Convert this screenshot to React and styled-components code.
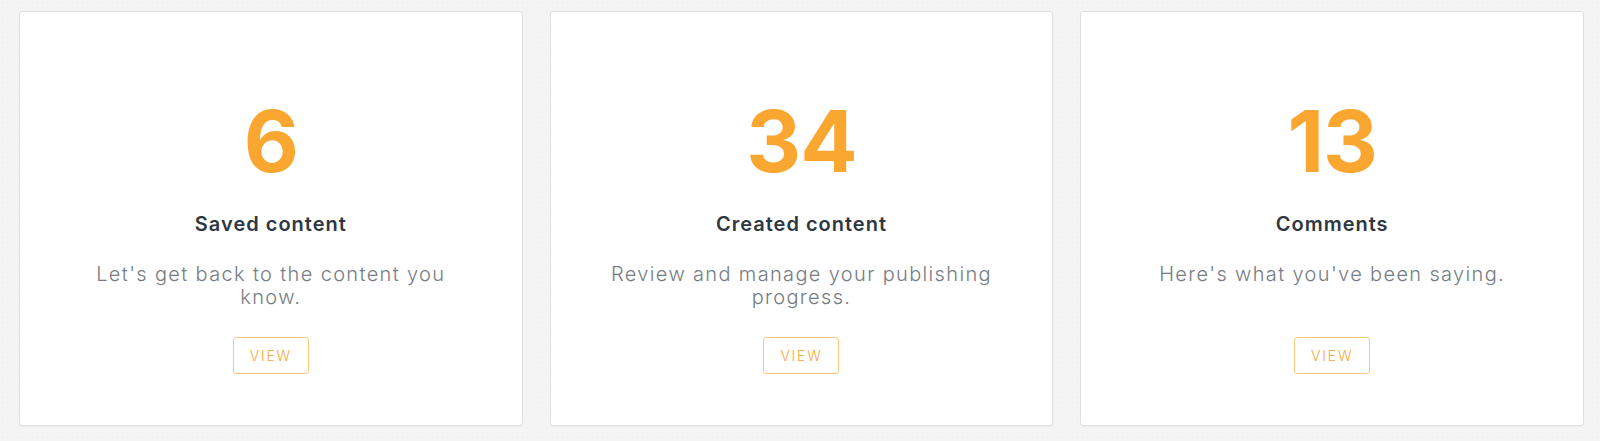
import React from "react";
import styled, { createGlobalStyle } from "styled-components";

const GlobalStyle = createGlobalStyle`
  html, body {
    margin: 0;
    padding: 0;
  }
  body {
    font-family: Inter, "Liberation Sans", sans-serif;
    background-color: #f4f4f4;
    background-image: radial-gradient(#ededed 0.7px, transparent 1px);
    background-size: 5px 5px;
  }
`;

const stats = [
  {
    count: 6,
    title: "Saved content",
    text: "Let's get back to the content you know.",
  },
  {
    count: 34,
    title: "Created content",
    text: "Review and manage your publishing progress.",
  },
  {
    count: 13,
    title: "Comments",
    text: "Here's what you've been saying.",
  },
];

function App() {
  return (
    <>
      <GlobalStyle />
      <Grid>
        {stats.map((s) => (
          <Card key={s.title}>
            <Count>{s.count}</Count>
            <Title>{s.title}</Title>
            <Text>{s.text}</Text>
            <ViewBtn>View</ViewBtn>
          </Card>
        ))}
      </Grid>
    </>
  );
}

const Grid = styled.div`
  display: grid;
  grid-template-columns: repeat(3, 1fr);
  gap: 27px;
  padding: 11px 16px 15px 19px;
`;

const Card = styled.div`
  display: flex;
  flex-direction: column;
  align-items: center;
  text-align: center;
  background: #fff;
  border: 1px solid #e0e0e0;
  border-radius: 3px;
  box-shadow: 0 1px 1px rgba(0, 0, 0, 0.03);
  padding: 87px 50px 51px;
`;

const Count = styled.div`
  font-size: 85px;
  line-height: 85px;
  font-weight: 700;
  color: #f9a730;
  letter-spacing: -1px;
`;

const Title = styled.h3`
  margin: 28px 0 0;
  font-size: 20px;
  line-height: 24px;
  font-weight: 600;
  letter-spacing: 1px;
  color: #2e3842;
`;

const Text = styled.p`
  margin: 27px 0 0;
  max-width: 395px;
  min-height: 46px;
  font-size: 20px;
  line-height: 23px;
  font-weight: 300;
  letter-spacing: 1.35px;
  color: #767c84;
`;

const ViewBtn = styled.button`
  margin-top: 28px;
  width: 76px;
  height: 37px;
  border: 1px solid #fbc77f;
  border-radius: 3px;
  background: #fff;
  color: #f9a73e;
  font-family: inherit;
  font-size: 14px;
  font-weight: 300;
  letter-spacing: 1.8px;
  text-transform: uppercase;
  cursor: pointer;
`;

export default App;
